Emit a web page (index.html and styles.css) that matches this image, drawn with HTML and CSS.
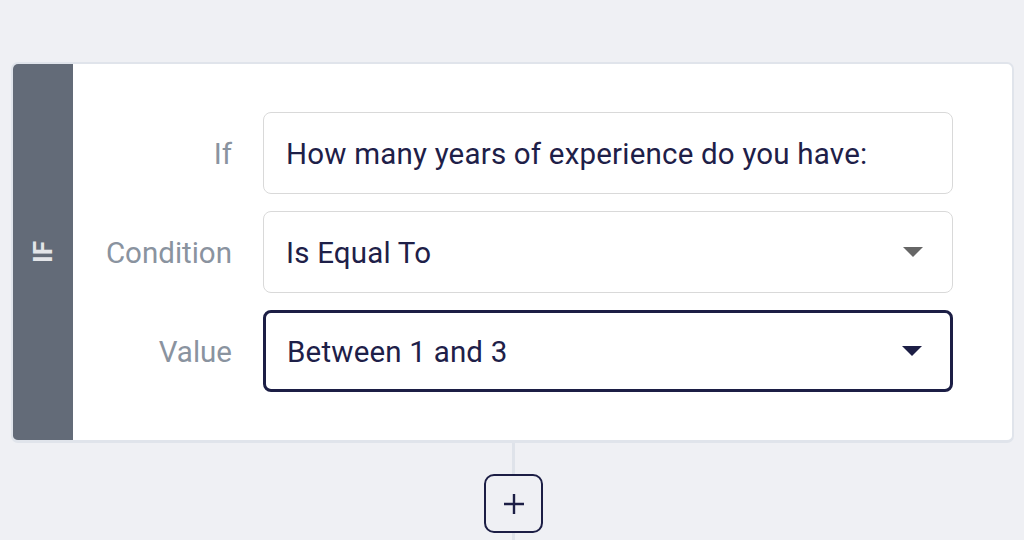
FILE: index.html
```html
<!DOCTYPE html>
<html>
<head>
<meta charset="utf-8">
<link rel="stylesheet" href="styles.css">
</head>
<body>
<div class="page">
  <div class="card">
    <div class="side"><span class="side-label">IF</span></div>
    <div class="form">
      <div class="label">If</div>
      <div class="field">How many years of experience do you have:</div>
      <div class="label">Condition</div>
      <div class="field select">
        <span>Is Equal To</span>
        <svg class="caret" width="20" height="10" viewBox="0 0 20 10"><path d="M0 0H20L10 10Z" fill="#666666"/></svg>
      </div>
      <div class="label">Value</div>
      <div class="field select active">
        <span>Between 1 and 3</span>
        <svg class="caret" width="20" height="10" viewBox="0 0 20 10"><path d="M0 0H20L10 10Z" fill="#1c1e45"/></svg>
      </div>
    </div>
  </div>
  <div class="connector">
    <div class="line"></div>
    <button class="add">
      <svg width="22" height="22" viewBox="0 0 22 22"><path d="M11 1V21M1 11H21" stroke="#1c1e45" stroke-width="2.4"/></svg>
    </button>
    <div class="line"></div>
  </div>
</div>
</body>
</html>
```
FILE: styles.css
```css
html, body {
  margin: 0;
  padding: 0;
  background: #eff0f4;
  font-family: Roboto, "Liberation Sans", sans-serif;
}
.page {
  padding: 62px 10px 0 11px;
  height: 540px;
  box-sizing: border-box;
  overflow: hidden;
}
.card {
  display: flex;
  background: #ffffff;
  border: 2px solid #e0e4eb;
  border-bottom-width: 3px;
  border-radius: 7px;
  overflow: hidden;
}
.side {
  width: 60px;
  flex: none;
  background: #636b78;
  display: flex;
  align-items: center;
  justify-content: center;
}
.side-label {
  transform: rotate(-90deg);
  color: #e3e5e9;
  font-weight: 700;
  font-size: 26px;
  line-height: 1;
  display: block;
}
.form {
  flex: 1;
  display: grid;
  grid-template-columns: 159px 1fr;
  column-gap: 31px;
  row-gap: 17px;
  align-items: center;
  padding: 48px 59px 48px 0;
}
.label {
  text-align: right;
  color: #8a939f;
  font-size: 29.5px;
  padding-top: 2px;
}
.field {
  height: 82px;
  box-sizing: border-box;
  border: 1.5px solid #d9d9d9;
  border-radius: 8px;
  padding: 2px 29px 0 22px;
  display: flex;
  align-items: center;
  justify-content: space-between;
  color: #1e2048;
  font-size: 29.5px;
  letter-spacing: 0.2px;
}
.field.active {
  border: 3px solid #1c1e45;
  padding-left: 21px;
  padding-right: 28px;
}
.caret {
  flex: none;
  display: block;
  margin-top: -2px;
}
.connector {
  display: flex;
  flex-direction: column;
  align-items: center;
  padding-left: 2px;
}
.line {
  width: 3px;
  height: 31px;
  background: #dfe3ea;
}
.add {
  width: 59px;
  height: 59px;
  box-sizing: border-box;
  border: 2px solid #1c1e45;
  border-radius: 10px;
  background: #eff0f4;
  display: flex;
  align-items: center;
  justify-content: center;
  padding: 0;
  margin: 0;
}
.add svg {
  display: block;
}
```
